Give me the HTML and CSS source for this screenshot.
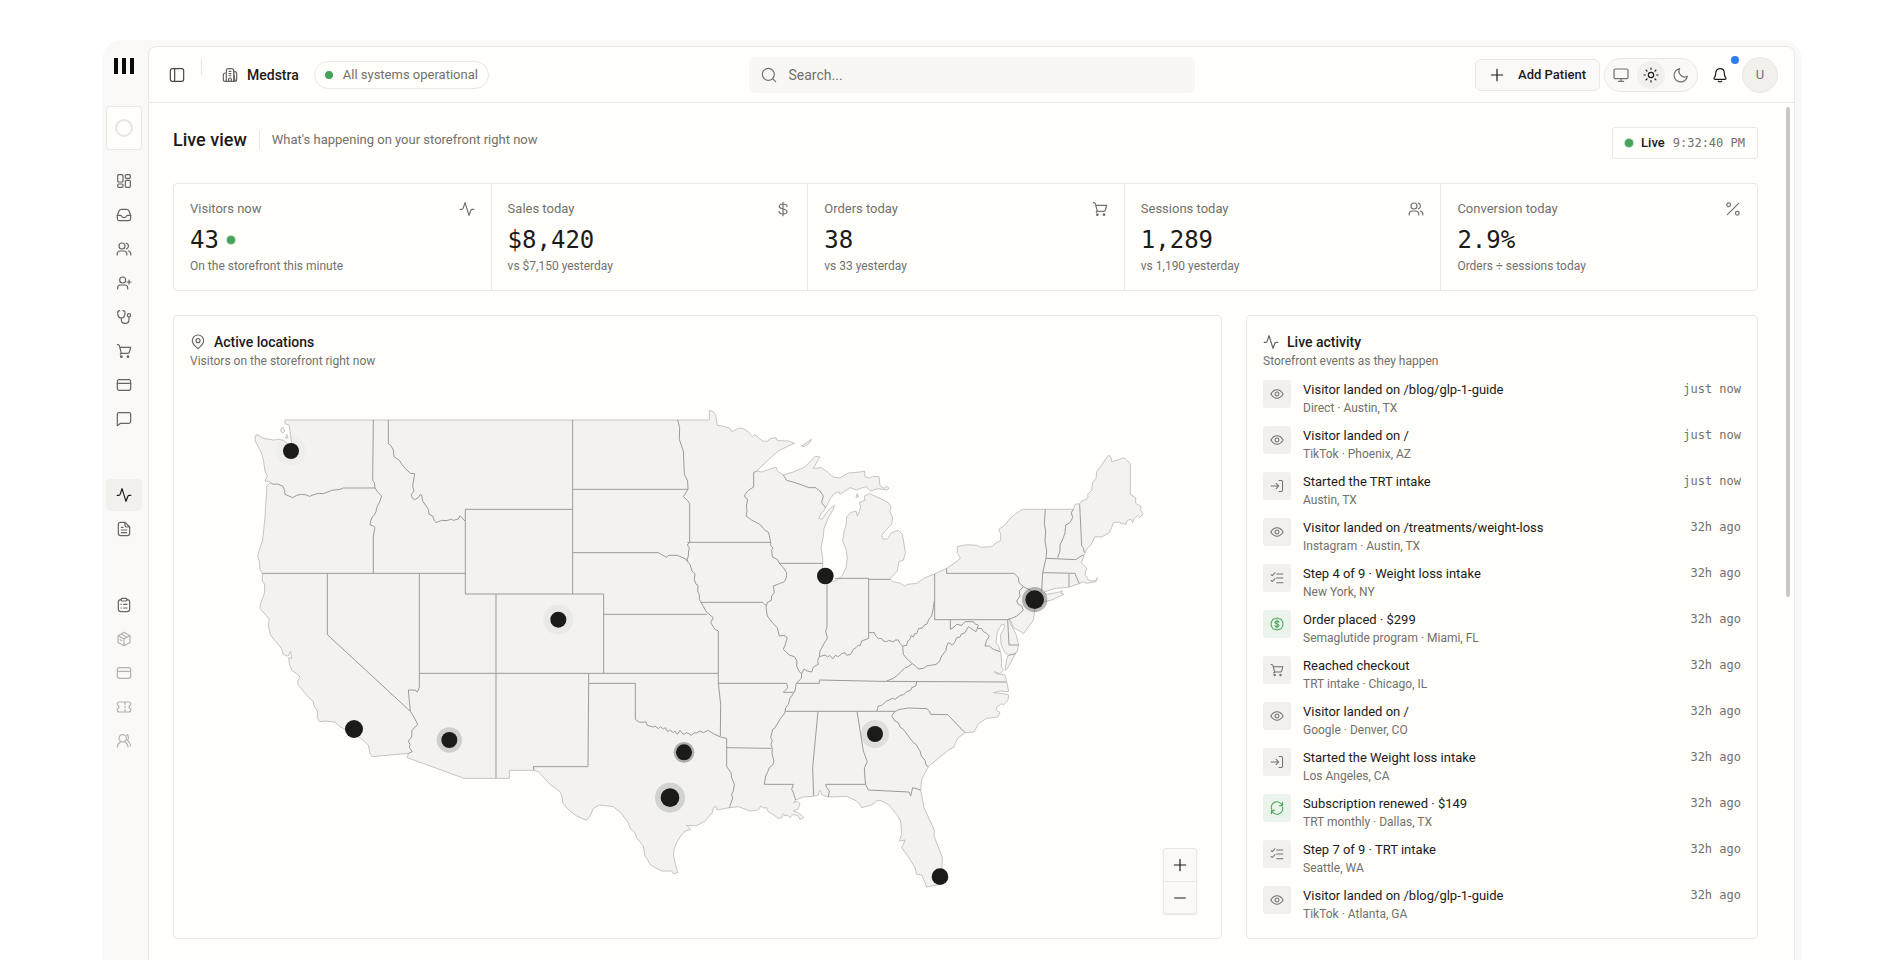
FILE: index.html
```html
<!DOCTYPE html>
<html lang="en">
<head>
<meta charset="utf-8">
<meta name="viewport" content="width=device-width, initial-scale=1">
<title>Medstra – Live view</title>
<link rel="stylesheet" href="styles.css">
</head>
<body>
<svg class="defs" aria-hidden="true">
  <symbol id="i-dashboard" viewBox="0 0 24 24"><rect x="2.5" y="2.5" width="8" height="11" rx="1.5"/><rect x="14" y="2.5" width="7.5" height="5.5" rx="1.5"/><rect x="2.5" y="16.500" width="8" height="5" rx="1.5"/><rect x="14" y="11" width="7.500" height="10.500" rx="1.5"/></symbol>
  <symbol id="i-inbox" viewBox="0 0 24 24"><path d="M2 12.500 5 5.300C5.600 3.900 6.300 3.500 8 3.500h8c1.700 0 2.400.4 3 1.800l3 7.200v4.500c0 2.500-1 3.500-3.500 3.500h-13C3 20.500 2 19.500 2 17z"/><path d="M2 12.500h4.500c1 0 1.500.5 2 1.500.7 1.500 1.700 2 3.500 2s2.800-.5 3.500-2c.5-1 1-1.500 2-1.500H22"/></symbol>
  <symbol id="i-users" viewBox="0 0 24 24"><circle cx="9" cy="7.500" r="4.500"/><path d="M1.800 21v-1.500c0-3 2-4.500 4.500-4.500h5.400c2.500 0 4.500 1.500 4.500 4.500V21M15.500 3.200a4.500 4.500 0 0 1 0 8.600M18.500 15c2.300.5 3.700 2 3.700 4.500V21"/></symbol>
  <symbol id="i-user-add" viewBox="0 0 24 24"><circle cx="10" cy="7.500" r="4.500"/><path d="M2.500 21v-1.500c0-3 2-4.500 4.500-4.500h6c2.500 0 4.500 1.500 4.500 4.500V21M19.500 7.500v6M16.500 10.500h6"/></symbol>
  <symbol id="i-steth" viewBox="0 0 24 24"><path d="M5.500 2.500C3 2.500 2.500 4 2.500 6c0 4.500 2 7.500 5.500 7.500s5.500-3 5.500-7.500c0-2-.5-3.500-3-3.500M8 13.500V16c0 3.500 2 5.500 5.500 5.500s6-2 6-5.500v-4"/><circle cx="19.500" cy="9.500" r="2.500"/></symbol>
  <symbol id="i-cart" viewBox="0 0 24 24"><path d="M2 2.500h.8c1.200 0 2 .7 2.300 1.900L8 15.500h9.500c1.500 0 2.200-.6 2.600-2L22 6.500H5.800"/><path d="M8 15.500c-1 0-1.500.8-1.500 1.500"/><circle cx="8" cy="20.500" r="1.200"/><circle cx="18" cy="20.500" r="1.200"/></symbol>
  <symbol id="i-card" viewBox="0 0 24 24"><rect x="2" y="4" width="20" height="16" rx="3"/><path d="M2 9.500h20"/></symbol>
  <symbol id="i-chat" viewBox="0 0 24 24"><path d="M2 22V5c0-1.700 1-2.700 2.700-2.700h14.600C21 2.300 22 3.300 22 5v10.800c0 1.700-1 2.700-2.700 2.700H7C5 18.500 4.500 21.500 2 22z"/></symbol>
  <symbol id="i-activity" viewBox="0 0 24 24"><path d="M1.800 12.500h2.500c1 0 1.500-.4 1.900-1.500L9 2.500l6 19 3-8c.4-.8.900-1 1.700-1h2.500"/></symbol>
  <symbol id="i-doc" viewBox="0 0 24 24"><path d="M13.500 2H7C4.500 2 3.500 3 3.500 5.500v13C3.500 21 4.500 22 7 22h10c2.500 0 3.500-1 3.500-3.500V9z"/><path d="M13.500 2v4.500c0 1.800.7 2.500 2.500 2.500h4.500M8 17.500h8M8 13.500h8M8 9.500h2.500"/></symbol>
  <symbol id="i-clipboard" viewBox="0 0 24 24"><path d="M7.500 4C5 4 3.500 5 3.500 7.500v11C3.500 21 5 22 7.500 22h9c2.500 0 4-1 4-3.500v-11C20.500 5 19 4 16.500 4"/><rect x="7.500" y="2" width="9" height="4" rx="1.800"/><path d="M11.500 11h5M11.500 16.500h5M7.500 11H8M7.500 16.500H8"/></symbol>
  <symbol id="i-box" viewBox="0 0 24 24"><path d="M12 22 3 17.300V7L12 2l9 5v10.300zM3 7l9 4.800L21 7M12 12v10M7.500 4.500l9 5M6 13l2.500 1.300"/></symbol>
  <symbol id="i-ticket" viewBox="0 0 24 24"><path d="M2 7.500C2 5.500 3 4.500 5 4.500h14c2 0 3 1 3 3V9c-3.500.5-3.500 5.500 0 6v1.500c0 2-1 3-3 3H5c-2 0-3-1-3-3V15c3.500-.5 3.500-5.500 0-6z"/><path d="M13.500 4.500V8M13.500 11v2M13.500 16v3.500"/></symbol>
  <symbol id="i-group" viewBox="0 0 24 24"><circle cx="10" cy="8" r="5.500"/><path d="M2 21c.3-3.500 2-6.500 5-8M18 21c-.3-3.500-2-6.500-5-8M16 2.500c3 1.200 3.700 6 1 8.500 2.800 2 4.500 5 5 8.500"/></symbol>
  <symbol id="i-panel" viewBox="0 0 24 24"><rect x="2" y="2.500" width="20" height="19" rx="3"/><path d="M8.500 2.500v19"/></symbol>
  <symbol id="i-building" viewBox="0 0 24 24"><path d="M6.500 21.500V5.500c0-2 1-3 3-3h5c2 0 3 1 3 3v16M4.500 21.500C2.500 21.500 2 20.500 2 19v-7c0-2 1-3 3-3h1.500M17.500 7H19c2 0 3 1 3 3v9c0 1.500-.5 2.500-2.500 2.500zM4.500 21.500h15M10 21.500V18c0-1 .5-1.500 2-1.500s2 .5 2 1.500v3.500M10.500 6.500h3M10.500 9.800h3M10.500 13.100h3"/></symbol>
  <symbol id="i-search" viewBox="0 0 24 24"><circle cx="11" cy="11" r="9"/><path d="m17.500 17.500 4.500 4.500"/></symbol>
  <symbol id="i-plus" viewBox="0 0 24 24"><path d="M12 3.500v17M3.500 12h17"/></symbol>
  <symbol id="i-minus" viewBox="0 0 24 24"><path d="M4 12h16"/></symbol>
  <symbol id="i-monitor" viewBox="0 0 24 24"><rect x="1.500" y="3" width="21" height="14.500" rx="2"/><path d="M12 17.500V21M8 21.500h8"/></symbol>
  <symbol id="i-sun" viewBox="0 0 24 24"><circle cx="12" cy="12" r="4"/><path d="M12 1.500V3.500M12 20.500v2M22.500 12h-2M3.500 12h-2M19.400 4.600 18 6M6 18l-1.400 1.400M19.400 19.400 18 18M6 6 4.600 4.600"/></symbol>
  <symbol id="i-moon" viewBox="0 0 24 24"><path d="M21.500 14A8.600 8.600 0 0 1 10 2.500 10 10 0 1 0 21.500 14z"/></symbol>
  <symbol id="i-bell" viewBox="0 0 24 24"><path d="M5.500 9.500C5.500 5.500 8 2.500 12 2.500s6.500 3 6.500 7c0 4 .7 5 1.700 6 1.500 1.700.9 3-1.200 3H5c-2.100 0-2.700-1.300-1.200-3 1-1 1.700-2 1.700-6z"/><path d="M9.500 21.500c1.300 1 3.700 1 5 0"/></symbol>
  <symbol id="i-dollar" viewBox="0 0 24 24"><path d="M18 8c-.3-2.300-2.500-3.500-6-3.500S6.500 6 6.500 8.200c0 5.300 11.500 2.300 11.500 7.600 0 2.400-2.300 3.700-6 3.700S6 18 6 15.500M12 2v20"/></symbol>
  <symbol id="i-percent" viewBox="0 0 24 24"><circle cx="5.500" cy="5.500" r="2.800"/><circle cx="18.500" cy="18.500" r="2.800"/><path d="M20.500 3.500l-17 17"/></symbol>
  <symbol id="i-pin" viewBox="0 0 24 24"><path d="M12 22C8 18.500 3.500 15 3.500 10a8.500 8.500 0 0 1 17 0c0 5-4.500 8.500-8.500 12z"/><circle cx="12" cy="10" r="3"/></symbol>
  <symbol id="i-eye" viewBox="0 0 24 24"><path d="M1.500 12C4.300 7.300 7.800 4.800 12 4.800s7.700 2.500 10.500 7.200c-2.800 4.700-6.300 7.200-10.500 7.200S4.300 16.700 1.500 12z"/><circle cx="12" cy="12" r="3.300"/></symbol>
  <symbol id="i-login" viewBox="0 0 24 24"><path d="M2 12h12M10.500 7.500 15 12l-4.500 4.500M15.500 2.500H19c1.700 0 2.500.8 2.500 2.500v14c0 1.700-.8 2.500-2.500 2.500h-3.500"/></symbol>
  <symbol id="i-checks" viewBox="0 0 24 24"><path d="M11.500 5H22M11.500 12H22M11.500 20H22M2 6.500l2 1.500 4.500-5M2 16.500l2 1.500 4.500-5"/></symbol>
  <symbol id="i-coin" viewBox="0 0 24 24"><path d="M12 1.500 15 3l3.500.5L20.500 6.500 22 9.500v5l-1.500 3-2 3-3.500.5-3 1.500L9 21l-3.500-.5-2-3L2 14.500v-5l1.500-3 2-3L9 3z"/><path d="M15.500 9c-.3-1.200-1.500-2-3.500-2s-3.300.8-3.300 2.300c0 3.600 6.800 1.700 6.800 5.200 0 1.600-1.500 2.500-3.500 2.500s-3.500-.8-3.500-2.300M12 5v14"/></symbol>
  <symbol id="i-refresh" viewBox="0 0 24 24"><path d="M21.500 2v5c0 .8-.4 1-1 1H16M20.800 8A9.500 9.500 0 0 0 2.600 13.500M2.500 22v-5c0-.8.400-1 1-1H8M3.200 16a9.500 9.500 0 0 0 18.200-5.500"/></symbol>
</svg>

<div class="shell">
  <aside class="sidebar">
    <div class="logo" role="img" aria-label="Medstra logo"><span></span><span></span><span></span></div>
    <button class="team" aria-label="Switch team"><span></span></button>
    <nav class="nav" aria-label="Main">
      <div class="nav-group">
        <a href="#" aria-label="Dashboard"><svg class="icon"><use href="#i-dashboard"/></svg></a>
        <a href="#" aria-label="Inbox"><svg class="icon"><use href="#i-inbox"/></svg></a>
        <a href="#" aria-label="Patients"><svg class="icon"><use href="#i-users"/></svg></a>
        <a href="#" aria-label="New patient"><svg class="icon"><use href="#i-user-add"/></svg></a>
        <a href="#" aria-label="Providers"><svg class="icon"><use href="#i-steth"/></svg></a>
        <a href="#" aria-label="Orders"><svg class="icon"><use href="#i-cart"/></svg></a>
        <a href="#" aria-label="Payments"><svg class="icon"><use href="#i-card"/></svg></a>
        <a href="#" aria-label="Messages"><svg class="icon"><use href="#i-chat"/></svg></a>
      </div>
      <div class="nav-group">
        <a href="#" class="active" aria-current="page" aria-label="Live view"><svg class="icon"><use href="#i-activity"/></svg></a>
        <a href="#" aria-label="Reports"><svg class="icon"><use href="#i-doc"/></svg></a>
      </div>
      <div class="nav-group">
        <a href="#" aria-label="Intakes"><svg class="icon"><use href="#i-clipboard"/></svg></a>
        <a href="#" class="dim" aria-label="Products"><svg class="icon"><use href="#i-box"/></svg></a>
        <a href="#" class="dim" aria-label="Plans"><svg class="icon"><use href="#i-card"/></svg></a>
        <a href="#" class="dim" aria-label="Coupons"><svg class="icon"><use href="#i-ticket"/></svg></a>
        <a href="#" class="dim" aria-label="Affiliates"><svg class="icon"><use href="#i-group"/></svg></a>
      </div>
    </nav>
  </aside>

  <div class="panel">
    <header class="topbar">
      <div class="top-left">
        <button class="plain" aria-label="Toggle sidebar"><svg class="icon"><use href="#i-panel"/></svg></button>
        <span class="divider"></span>
        <span class="org"><svg class="icon"><use href="#i-building"/></svg>Medstra</span>
        <span class="status"><span class="dot"></span>All systems operational</span>
      </div>
      <label class="search"><svg class="icon"><use href="#i-search"/></svg><input type="text" placeholder="Search..." aria-label="Search"></label>
      <div class="top-right">
        <button class="add"><svg class="icon"><use href="#i-plus"/></svg>Add Patient</button>
        <div class="theme">
          <button aria-label="System theme"><svg class="icon"><use href="#i-monitor"/></svg></button>
          <button class="on" aria-label="Light theme"><svg class="icon"><use href="#i-sun"/></svg></button>
          <button aria-label="Dark theme"><svg class="icon"><use href="#i-moon"/></svg></button>
        </div>
        <button class="bell" aria-label="Notifications"><svg class="icon"><use href="#i-bell"/></svg><span class="badge"></span></button>
        <button class="avatar">U</button>
      </div>
    </header>

    <main class="content">
      <div class="page-head">
        <div class="titles"><h1>Live view</h1><p>What's happening on your storefront right now</p></div>
        <div class="live"><span class="dot glow"></span><strong>Live</strong><time>9:32:40 PM</time></div>
      </div>

      <section class="stats">
        <div class="stat"><div class="stat-label">Visitors now<svg class="icon"><use href="#i-activity"/></svg></div><div class="stat-value">43<span class="dot glow"></span></div><p>On the storefront this minute</p></div>
        <div class="stat"><div class="stat-label">Sales today<svg class="icon"><use href="#i-dollar"/></svg></div><div class="stat-value">$8,420</div><p>vs $7,150 yesterday</p></div>
        <div class="stat"><div class="stat-label">Orders today<svg class="icon"><use href="#i-cart"/></svg></div><div class="stat-value">38</div><p>vs 33 yesterday</p></div>
        <div class="stat"><div class="stat-label">Sessions today<svg class="icon"><use href="#i-users"/></svg></div><div class="stat-value">1,289</div><p>vs 1,190 yesterday</p></div>
        <div class="stat"><div class="stat-label">Conversion today<svg class="icon"><use href="#i-percent"/></svg></div><div class="stat-value">2.9%</div><p>Orders ÷ sessions today</p></div>
      </section>

      <div class="columns">
        <section class="card map-card">
          <h2><svg class="icon"><use href="#i-pin"/></svg>Active locations</h2>
          <p class="card-sub">Visitors on the storefront right now</p>
          <div class="map-wrap">
            <svg class="map" viewBox="-150 -45 3045 1638" role="img" aria-label="Map of active visitors">
              <path class="land" d="M135 87H1408V58L1420 62 1427 72 1432 103 1450 106 1470 112 1475 122 1495 112 1508 112 1525 122 1530 130 1537 137 1541 133 1548 132 1556 141 1570 151 1583 150 1592 143 1608 140 1612 149 1645 150 1664 157 1645 165 1615 180 1590 202 1550 240 1565 243 1608 228 1612 240 1630 252 1660 243 1695 228 1725 196 1740 198 1728 218 1720 232 1745 230 1765 245 1778 258 1800 261 1825 246 1860 243 1873 240 1875 257 1890 262 1897 256 1917 257 1920 284 1932 292 1940 286 1947 292 1940 297 1915 293 1890 300 1880 287 1865 291 1850 297 1830 290 1815 300 1800 310 1797 302 1780 310 1770 325 1757 350 1750 362 1744 365 1736 383 1747 384 1762 362 1775 348 1784 343 1778 358 1765 380 1752 412 1750 435 1743 470 1748 500 1748 530 1756 572 1785 570 1805 557 1818 530 1822 500 1818 475 1808 450 1812 420 1818 405 1820 378 1832 365 1848 360 1852 375 1858 362 1862 348 1858 335 1875 328 1873 315 1888 308 1905 315 1920 322 1945 335 1953 347 1950 362 1958 380 1955 400 1940 415 1925 433 1930 445 1943 443 1955 425 1975 418 1987 430 1993 465 1996 488 1990 507 1977 512 1972 540 1950 563 1960 573 1980 576 1993 585 2003 580 2030 577 2055 560 2083 549 2120 532 2155 508 2161 500 2152 487V467L2180 461 2210 463 2222 469 2255 467 2268 456 2282 449V428L2276 415 2295 402 2305 388 2325 370 2347 355H2500L2505 340 2520 338 2525 330 2540 325 2545 315 2542 311 2555 298 2558 275 2568 262 2570 243 2605 193 2613 198 2615 212 2635 206 2652 200 2671 218V310L2687 320V337L2703 347 2702 358 2709 368 2700 380 2692 374 2683 382 2678 395 2674 385 2662 388 2657 402 2652 396 2645 400 2640 393 2620 395 2615 410 2608 425 2585 438 2565 437 2552 463 2543 470 2533 490 2524 515 2540 532 2535 550 2545 567 2557 570 2570 567 2572 560 2568 572 2540 577 2530 572 2518 578 2505 582 2485 589 2445 592 2412 603 2420 610 2450 605 2468 600 2463 607 2472 610 2435 627 2390 638 2384 660 2380 688 2350 728 2343 722 2320 710 2312 690 2306 682 2315 705 2328 730 2336 762 2332 780 2325 790 2312 815 2300 835 2295 838 2300 805 2305 793 2295 785 2290 775 2283 760 2282 730 2293 710 2293 700 2285 700 2272 722 2268 755 2278 770 2283 790 2285 815 2283 825 2290 838 2280 848 2263 842 2268 848 2295 852 2300 872 2306 902 2280 900 2260 905 2290 908 2306 912 2304 927 2290 942 2285 938 2270 948 2270 958 2280 965 2273 978 2240 982 2215 998 2202 1023 2175 1025 2155 1040 2145 1058 2142 1068 2125 1078 2100 1098 2065 1127 2045 1165 2042 1197 2052 1250 2068 1285 2083 1317 2082 1335 2107 1400 2105 1440 2098 1480 2060 1488 2055 1475 2045 1452 2030 1450 2025 1430 2008 1402 2005 1398 1985 1370 1996 1347 1978 1350 1985 1330 1982 1290 1970 1270 1945 1240 1920 1228 1910 1230 1895 1242 1865 1250 1862 1243 1850 1230 1820 1216 1765 1218 1755 1215 1745 1210 1742 1198 1738 1200 1735 1212 1720 1216 1690 1218 1667 1227 1660 1235 1672 1231 1680 1238 1675 1253 1660 1260 1675 1265 1692 1280 1680 1285 1674 1274 1660 1270 1650 1280 1642 1272 1635 1275 1630 1268 1625 1280 1615 1282 1602 1272 1585 1262 1580 1250 1570 1251 1562 1245 1557 1254 1550 1258 1530 1260 1495 1247 1468 1250 1432 1257 1428 1246 1420 1250 1417 1265 1395 1290 1370 1304 1350 1304 1340 1303 1352 1315 1335 1320 1320 1338 1310 1355 1303 1372 1300 1390 1305 1415 1313 1445 1300 1448 1295 1440 1265 1440 1245 1430 1230 1420 1222 1405 1215 1395 1210 1365 1190 1340 1185 1325 1170 1312 1165 1295 1152 1278 1145 1268 1120 1247 1078 1242 1060 1252 1050 1275 1040 1288 1010 1275 982 1253 968 1235 967 1220 960 1202 930 1180 895 1142 880 1138H808V1162H672L502 1100 505 1087 396 1097 390 1088 385 1062 360 1040 310 1013 298 1005 285 993 255 990 238 992 232 980 233 960 222 945 220 932 205 918 175 883 173 870 180 858 170 848 155 838 148 818 146 800 155 802 152 780 145 795 138 794 130 790 125 773 92 733 85 705 88 685 60 652 62 638 73 608 74 580 67 570 67 547 60 535 58 510 53 495 60 470 68 447 75 380 80 300 80 285 92 275 86 271 75 270 82 255 75 240 70 205 62 180 57 172 46 150 45 138 50 130 70 142 100 147 118 145 130 148 145 160 155 157 150 120 148 103 135 98zM128 108l7 12-7 7-7-9zM140 130l4 10-7 2zM1685 165l29-20-6 12-16 10zM1852 307l3 11h-7z"/>
              <path class="border" d="M92 275 100 280 112 279 128 285 134 298 135 310 158 320 170 313 185 310 200 312 208 316 222 311 235 307 250 308 275 298 300 295 310 291H405M400 87 398 268 403 275 405 291 412 302 425 315 420 330 410 350 408 362 403 372 398 376 392 390 390 402 398 404 405 409 400 435V547M67 547H676M262 547V731L511 961M538 547V890L532 903 525 897H505L511 961 520 975 533 1000 516 1018 515 1038 505 1050 510 1060 508 1070 517 1082 505 1087M538 847H1434M768 609V1162M445 87V158L452 163 460 177 462 197 478 208 485 219 498 235 512 247 524 248 518 285 522 300 514 310 516 320 524 326 535 320 540 311 545 312 548 330 565 355 567 370 578 375 583 388 588 395 605 388 618 389 635 385 640 388 655 384 660 374 675 390M998 355H676V609H1091V847M998 87V609M998 295H1344M998 485H1255L1265 491 1280 499 1285 493 1312 493 1335 503 1345 510M1091 670H1400M1313 87 1319 110 1318 145 1330 180 1333 250 1343 270 1344 295 1330 317 1342 328 1349 338V454M1342 454H1592M1349 454 1342 462 1348 470 1346 480 1345 495 1340 510 1350 520 1356 540 1365 548 1363 565 1367 578 1374 583 1373 600 1378 612 1378 625 1400 664 1420 680 1412 695 1425 715 1435 720V877H1640L1643 890 1630 904H1660M1382 634H1568L1580 645M1435 877 1442 940 1441 1035M1046 847V875L1044 1127H880L882 1138M1046 877H1186V985L1198 994 1218 993 1222 1003 1240 1008 1245 1005 1255 1013 1262 1007 1270 1014 1276 1010 1283 1022 1289 1017 1300 1025 1305 1020 1312 1030 1320 1018 1330 1030 1340 1025 1355 1033 1362 1025 1370 1026 1380 1020 1390 1025 1405 1018 1420 1028 1442 1038 1460 1042V1127L1473 1145 1475 1160 1483 1180 1480 1200 1475 1210 1478 1222 1468 1250M1460 1070 1595 1072M1550 240 1541 245V288L1525 298 1515 310 1514 318 1523 325 1519 345 1521 360 1518 375 1535 387 1560 400 1573 416 1586 425 1592 454 1592 464 1599 471 1595 478 1597 498 1612 505 1618 517 1630 530 1640 545 1639 560 1633 572 1618 578 1600 585 1603 605 1595 615 1594 628 1582 634 1578 650 1582 675 1597 695 1612 710 1618 735 1632 733 1642 740 1636 760 1630 775 1648 792 1663 797 1671 810 1670 825 1678 842 1685 848 1684 862 1676 870 1668 880 1665 900 1650 922 1645 940 1637 950 1635 965 1620 985 1605 1010 1598 1015 1592 1040 1597 1048 1593 1060 1597 1072 1596 1088 1602 1110 1598 1122 1588 1130 1582 1145 1577 1155 1573 1180H1660L1655 1195 1660 1205 1667 1227M1618 517H1748M1630 252 1640 268 1665 275 1708 290 1728 290 1735 297 1740 300 1750 315 1745 335 1757 350M1761 580V708L1757 720 1762 742 1752 758 1740 780 1738 797 1733 808 1735 820 1720 828 1715 843 1702 840 1692 834 1685 848M1738 797 1755 792 1763 798 1768 793 1779 803 1786 793 1795 797 1805 788 1815 785 1820 793 1832 790 1840 775 1848 770 1855 762 1860 765 1865 750 1886 742V725H1903L1907 735 1915 742 1925 743 1930 750 1940 752 1946 748 1960 753 1965 747 1975 747 1980 757 1988 765 2000 763 2003 750 2010 745 2014 733 2020 738 2024 728 2030 728 2036 712 2046 712 2052 703 2062 698 2066 685 2075 675 2080 650 2083 630M1785 562H1886V725M1886 565H1950M2084 549V686H2303M2120 532V547H2322L2335 560 2337 575 2350 587 2375 600M2350 587 2338 600 2340 615 2330 630 2335 640 2345 645 2350 658 2342 665 2330 675 2315 682 2303 686 2307 762H2336M2305 793 2327 788M2131 686V715L2142 708 2150 700 2165 703 2175 692 2200 692 2203 698 2215 702 2212 712 2225 713 2230 722 2240 727 2248 735 2240 748 2235 765 2248 765 2260 775 2280 782M2212 712 2208 722 2185 707 2175 725 2163 730 2160 738 2150 740 2145 752 2138 762 2125 755 2120 765 2118 778 2105 795 2098 812 2088 820 2060 825 2050 832 2035 834 2030 828 2017 818 2002 805 1990 790 1988 765M2017 818 2003 828 1995 830 1980 845 1972 853 1960 862 1940 870M2300 873 1920 871 1738 867V877H1668M2030 873 2027 885 2015 890 2012 898 2000 902 1990 912 1983 912 1965 925 1958 922 1940 930 1925 943 1915 945 1910 961M1635 961H1965L1980 955 2005 951 2060 953 2068 960 2072 970 2123 971 2175 1025M1965 961 1955 975 1965 990 1975 995 1980 1008 1990 1015 2005 1035 2020 1055 2028 1060 2040 1080 2044 1095 2055 1108 2058 1122 2065 1127M1734 961 1718 1130 1721 1214M1851 961 1870 1080 1882 1112 1873 1130 1875 1165 1877 1180 1885 1197 2007 1203 2012 1215 2018 1190 2042 1197M1877 1180H1757L1760 1190 1768 1200 1765 1218M2416 355 2413 400 2417 420 2415 450 2420 480 2418 502 2408 545 2405 600M2500 355 2494 365 2498 380 2490 395 2477 402 2475 425 2470 440 2460 462 2460 480 2453 500M2418 502 2508 506 2518 498 2530 492M2519 340 2525 465 2530 470 2533 485M2408 545 2505 547 2510 560 2518 578M2487 547V588"/>
              <g class="halo"><circle cx="153" cy="180" r="45" opacity=".02"/><circle cx="955" cy="686" r="45" opacity=".04"/><circle cx="628" cy="1047" r="38" opacity=".16"/><circle cx="1905" cy="1029" r="42" opacity=".09"/><circle cx="1332" cy="1084" r="31" opacity=".32"/><circle cx="1290" cy="1220" r="45" opacity=".15"/><circle cx="2384" cy="626" r="38" opacity=".3"/></g>
              <g class="pin"><circle cx="153" cy="180" r="24"/><circle cx="955" cy="686" r="24"/><circle cx="342" cy="1014" r="27"/><circle cx="628" cy="1047" r="24"/><circle cx="1905" cy="1029" r="24"/><circle cx="1332" cy="1084" r="24"/><circle cx="1290" cy="1220" r="28"/><circle cx="2100" cy="1457" r="25"/><circle cx="1756" cy="555" r="25"/><circle cx="2384" cy="626" r="28"/></g>
            </svg>
            <div class="zoom"><button aria-label="Zoom in"><svg class="icon"><use href="#i-plus"/></svg></button><button aria-label="Zoom out"><svg class="icon"><use href="#i-minus"/></svg></button></div>
          </div>
        </section>

        <section class="card">
          <h2><svg class="icon"><use href="#i-activity"/></svg>Live activity</h2>
          <p class="card-sub">Storefront events as they happen</p>
          <ul class="feed">
            <li><span class="tile"><svg class="icon small"><use href="#i-eye"/></svg></span><div><b>Visitor landed on /blog/glp-1-guide</b><p>Direct · Austin, TX</p></div><time>just now</time></li>
            <li><span class="tile"><svg class="icon small"><use href="#i-eye"/></svg></span><div><b>Visitor landed on /</b><p>TikTok · Phoenix, AZ</p></div><time>just now</time></li>
            <li><span class="tile"><svg class="icon small"><use href="#i-login"/></svg></span><div><b>Started the TRT intake</b><p>Austin, TX</p></div><time>just now</time></li>
            <li><span class="tile"><svg class="icon small"><use href="#i-eye"/></svg></span><div><b>Visitor landed on /treatments/weight-loss</b><p>Instagram · Austin, TX</p></div><time>32h ago</time></li>
            <li><span class="tile"><svg class="icon small"><use href="#i-checks"/></svg></span><div><b>Step 4 of 9 · Weight loss intake</b><p>New York, NY</p></div><time>32h ago</time></li>
            <li><span class="tile good"><svg class="icon small"><use href="#i-coin"/></svg></span><div><b>Order placed · $299</b><p>Semaglutide program · Miami, FL</p></div><time>32h ago</time></li>
            <li><span class="tile"><svg class="icon small"><use href="#i-cart"/></svg></span><div><b>Reached checkout</b><p>TRT intake · Chicago, IL</p></div><time>32h ago</time></li>
            <li><span class="tile"><svg class="icon small"><use href="#i-eye"/></svg></span><div><b>Visitor landed on /</b><p>Google · Denver, CO</p></div><time>32h ago</time></li>
            <li><span class="tile"><svg class="icon small"><use href="#i-login"/></svg></span><div><b>Started the Weight loss intake</b><p>Los Angeles, CA</p></div><time>32h ago</time></li>
            <li><span class="tile good"><svg class="icon small"><use href="#i-refresh"/></svg></span><div><b>Subscription renewed · $149</b><p>TRT monthly · Dallas, TX</p></div><time>32h ago</time></li>
            <li><span class="tile"><svg class="icon small"><use href="#i-checks"/></svg></span><div><b>Step 7 of 9 · TRT intake</b><p>Seattle, WA</p></div><time>32h ago</time></li>
            <li><span class="tile"><svg class="icon small"><use href="#i-eye"/></svg></span><div><b>Visitor landed on /blog/glp-1-guide</b><p>TikTok · Atlanta, GA</p></div><time>32h ago</time></li>
          </ul>
        </section>
      </div>
    </main>
    <span class="scroll-thumb"></span>
  </div>
</div>
</body>
</html>
```
FILE: styles.css
```css
:root {
  --ink: #1c1b19;
  --muted: #72716c;
  --line: #e9e8e5;
  --side: #faf9f7;
  --paper: #fffefb;
  --tint: #f1f0ed;
  --green: #45a35a;
  --mono: "DejaVu Sans Mono", monospace;
}
* { box-sizing: border-box; }
body {
  margin: 0;
  padding: 40px 48px 0;
  height: 100vh;
  overflow: hidden;
  background: #fff;
  color: var(--ink);
  font-family: Roboto, "Liberation Sans", sans-serif;
  font-size: 13px;
  line-height: 20px;
}
h1, h2, p, ul { margin: 0; padding: 0; }
button, input { font: inherit; color: inherit; }
button { border: 0; background: none; padding: 0; display: flex; align-items: center; justify-content: center; }
.defs { display: none; }
.icon { width: 16px; height: 16px; flex: none; fill: none; stroke: currentColor; stroke-width: 1.8; stroke-linecap: round; stroke-linejoin: round; }
.icon.small { width: 14px; height: 14px; }

.shell {
  display: flex;
  max-width: 1700px;
  height: 100%;
  margin: 0 auto;
  padding: 6px 7px 0 0;
  background: var(--side);
  border-radius: 20px 20px 0 0;
}
.sidebar { flex: none; width: 46px; padding: 0 6px 0 4px; display: flex; flex-direction: column; align-items: flex-start; }
.logo { display: flex; gap: 4px; margin: 12px 0 0 8px; }
.logo span { width: 4px; height: 16px; background: #0b0b0a; }
.team { width: 36px; height: 44px; margin-top: 32px; background: var(--paper); border: 1px solid var(--line); border-radius: 4px; }
.team span { width: 18px; height: 18px; border: 2px solid #e6e5e2; border-radius: 50%; }
.nav { display: flex; flex-direction: column; gap: 44px; margin-top: 15px; }
.nav-group { display: flex; flex-direction: column; gap: 2px; }
.nav a { display: flex; align-items: center; justify-content: center; width: 36px; height: 32px; border-radius: 4px; color: #66655f; }
.nav a.active { background: var(--tint); color: var(--ink); }
.nav a.dim { color: #b3b2ae; }

.panel { position: relative; flex: 1; min-width: 0; display: flex; flex-direction: column; background: var(--paper); border: 1px solid var(--line); border-bottom: 0; border-radius: 8px 8px 0 0; }
.topbar { display: grid; grid-template-columns: 1fr 446px 1fr; align-items: center; height: 56px; padding: 0 16px; border-bottom: 1px solid var(--line); }
.top-left, .top-right { display: flex; align-items: center; }
.top-right { justify-content: flex-end; }
.plain { width: 24px; height: 24px; color: #4a4945; }
.divider { align-self: flex-start; width: 1px; height: 16px; margin: -2px 20px 0 12px; background: var(--line); }
.org { display: flex; align-items: center; gap: 9px; font-size: 14px; font-weight: 500; }
.org .icon { color: #66655f; }
.status { display: flex; align-items: center; gap: 10px; height: 28px; margin-left: 15px; padding: 0 10px; border: 1px solid var(--line); border-radius: 14px; color: var(--muted); }
.dot { width: 8px; height: 8px; border-radius: 50%; background: var(--green); }
.dot.glow { box-shadow: 0 0 0 1px #bfe0c6; }
.search { display: flex; align-items: center; gap: 12px; height: 36px; padding: 0 12px; background: #f8f7f4; border-radius: 6px; color: var(--muted); font-size: 14px; }
.search input { flex: 1; min-width: 0; border: 0; padding: 0; outline: 0; background: none; }
.search input::placeholder { color: var(--muted); opacity: 1; }
.add { gap: 13px; height: 32px; padding: 0 13px; background: var(--side); border: 1px solid var(--line); border-radius: 6px; font-weight: 500; }
.theme { display: flex; align-items: center; gap: 2px; height: 34px; margin-left: 4px; padding: 0 2px; background: var(--side); border: 1px solid var(--line); border-radius: 17px; color: var(--muted); }
.theme button { width: 28px; height: 28px; border-radius: 50%; }
.theme .on { background: var(--tint); color: var(--ink); }
.bell { position: relative; width: 32px; height: 32px; margin: 0 6px; }
.badge { position: absolute; top: -3px; right: -3px; width: 8px; height: 8px; border-radius: 50%; background: #2f7cf6; }
.avatar { width: 36px; height: 36px; border: 1px solid var(--line); border-radius: 50%; background: var(--tint); color: var(--muted); }

.content { flex: 1; min-height: 0; overflow: hidden; display: flex; flex-direction: column; gap: 24px; padding: 24px 36px 24px 24px; }
.page-head { display: flex; justify-content: space-between; align-items: center; }
.titles { display: flex; align-items: center; gap: 12px; margin-bottom: 6px; }
h1 { font-size: 18px; line-height: 20px; font-weight: 500; padding-right: 12px; border-right: 1px solid var(--line); }
.titles p { color: var(--muted); }
.live { display: flex; align-items: center; gap: 8px; height: 32px; padding: 0 12px; border: 1px solid var(--line); border-radius: 3px; }
.live strong { font-weight: 500; }
time { font-family: var(--mono); font-size: 12px; color: var(--muted); }

.stats { display: grid; grid-template-columns: repeat(5, 1fr); border: 1px solid var(--line); border-radius: 4px; }
.stat { padding: 16px; }
.stat + .stat { border-left: 1px solid var(--line); }
.stat-label { display: flex; justify-content: space-between; align-items: center; line-height: 18px; color: var(--muted); }
.stat-value { display: flex; align-items: center; gap: 8px; margin: 6px 0 2px; font-family: var(--mono); font-size: 24px; line-height: 32px; }
.stat p { font-size: 12px; line-height: 16px; color: var(--muted); }

.columns { display: grid; grid-template-columns: 1049fr 512fr; gap: 24px; }
.card { display: flex; flex-direction: column; min-width: 0; padding: 16px; border: 1px solid var(--line); border-radius: 4px; }
h2 { display: flex; align-items: center; gap: 8px; font-size: 14px; line-height: 20px; font-weight: 500; }
h2 .icon { color: #66655f; }
.card-sub { font-size: 12px; line-height: 18px; color: var(--muted); }
.map-wrap { position: relative; flex: 1; min-height: 0; display: flex; align-items: flex-end; }
.map { display: block; width: 100%; height: auto; }
.land { fill: #f3f2ef; fill-rule: evenodd; stroke: #c6c5c2; stroke-width: 3; stroke-linejoin: round; }
.border { fill: none; stroke: #9c9b98; stroke-width: 3; stroke-linejoin: round; }
.halo, .pin { fill: #1b1b19; }
.zoom { position: absolute; right: 8px; bottom: 8px; width: 34px; border: 1px solid var(--line); border-radius: 3px; background: var(--side); box-shadow: 0 1px 2px #0000001a; }
.zoom button { width: 32px; height: 32px; }
.zoom button + button { border-top: 1px solid var(--line); }

.feed { display: flex; flex-direction: column; gap: 10px; margin-top: 10px; list-style: none; }
.feed li { display: flex; align-items: flex-start; gap: 12px; height: 36px; }
.feed div { flex: 1; min-width: 0; }
.feed b { display: block; font-weight: 400; line-height: 20px; }
.feed p { font-size: 12px; line-height: 16px; color: var(--muted); }
.feed time { line-height: 18px; }
.tile { display: flex; align-items: center; justify-content: center; width: 28px; height: 28px; border-radius: 3px; background: var(--tint); color: var(--muted); }
.tile.good { background: #eaf4ea; color: var(--green); }

.scroll-thumb { position: absolute; top: 60px; right: 4px; width: 4px; height: 490px; border-radius: 2px; background: #c9c8c5; }
```
